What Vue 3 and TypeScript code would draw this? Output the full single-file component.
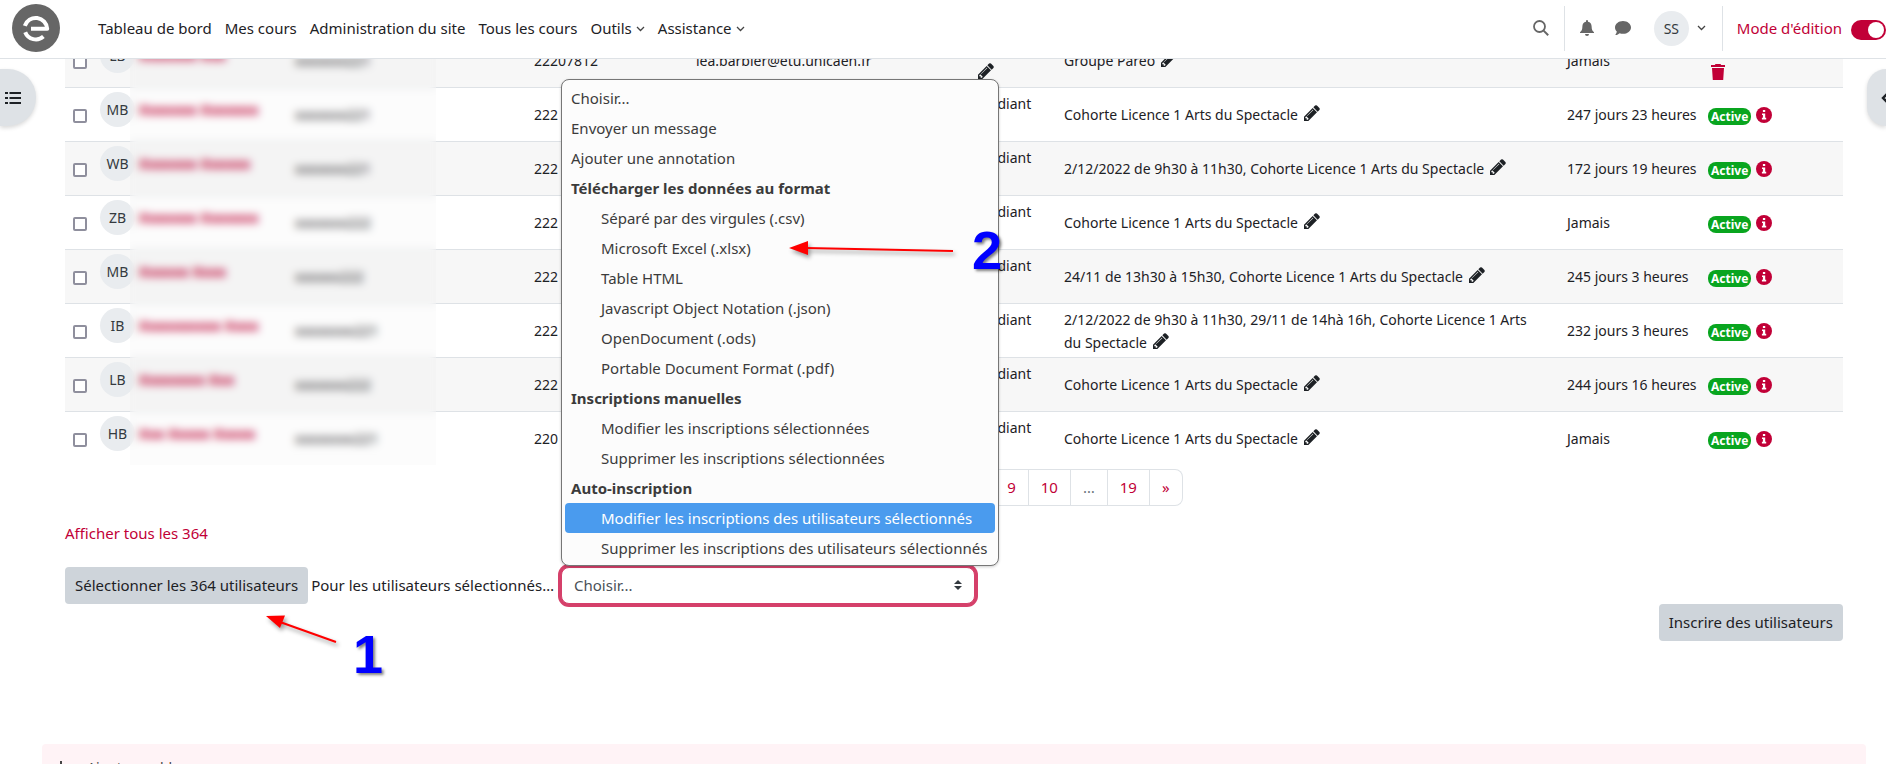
<script setup lang="ts">
import { ref } from 'vue'

interface Row {
  initials: string
  name: string
  login: string
  id: string
  email: string
  groups: string
  access: string
  active: boolean
}

const cohort = 'Cohorte Licence 1 Arts du Spectacle'

const rows: Row[] = [
  { initials: 'LB', name: 'Xxxxxxx Xxx', login: 'xxxxxxx221', id: '22207812', email: 'lea.barbier@etu.unicaen.fr', groups: 'Groupe Pareo', access: 'Jamais', active: false },
  { initials: 'MB', name: 'Xxxxxxx Xxxxxxx', login: 'xxxxxxx221', id: '222', email: '', groups: cohort, access: '247 jours 23 heures', active: true },
  { initials: 'WB', name: 'Xxxxxxx Xxxxxx', login: 'xxxxxxx221', id: '222', email: '', groups: '2/12/2022 de 9h30 à 11h30, ' + cohort, access: '172 jours 19 heures', active: true },
  { initials: 'ZB', name: 'Xxxxxxx Xxxxxxx', login: 'xxxxxxx222', id: '222', email: '', groups: cohort, access: 'Jamais', active: true },
  { initials: 'MB', name: 'Xxxxxx Xxxx', login: 'xxxxxx222', id: '222', email: '', groups: '24/11 de 13h30 à 15h30, ' + cohort, access: '245 jours 3 heures', active: true },
  { initials: 'IB', name: 'Xxxxxxxxxx Xxxx', login: 'xxxxxxxx221', id: '222', email: '', groups: '2/12/2022 de 9h30 à 11h30, 29/11 de 14hà 16h, ' + cohort, access: '232 jours 3 heures', active: true },
  { initials: 'LB', name: 'Xxxxxxxx Xxx', login: 'xxxxxxx222', id: '222', email: '', groups: cohort, access: '244 jours 16 heures', active: true },
  { initials: 'HB', name: 'Xxx Xxxxx Xxxxx', login: 'xxxxxxxx221', id: '220', email: '', groups: cohort, access: 'Jamais', active: true },
]

const nav = [
  { label: 'Tableau de bord', menu: false },
  { label: 'Mes cours', menu: false },
  { label: 'Administration du site', menu: false },
  { label: 'Tous les cours', menu: false },
  { label: 'Outils', menu: true },
  { label: 'Assistance', menu: true },
]

const pages = ['1', '2', '3', '4', '5', '6', '7', '8', '9', '10', '…', '19', '»']

const options: { label: string; kind: 'top' | 'group' | 'sub' }[] = [
  { label: 'Choisir...', kind: 'top' },
  { label: 'Envoyer un message', kind: 'top' },
  { label: 'Ajouter une annotation', kind: 'top' },
  { label: 'Télécharger les données au format', kind: 'group' },
  { label: 'Séparé par des virgules (.csv)', kind: 'sub' },
  { label: 'Microsoft Excel (.xlsx)', kind: 'sub' },
  { label: 'Table HTML', kind: 'sub' },
  { label: 'Javascript Object Notation (.json)', kind: 'sub' },
  { label: 'OpenDocument (.ods)', kind: 'sub' },
  { label: 'Portable Document Format (.pdf)', kind: 'sub' },
  { label: 'Inscriptions manuelles', kind: 'group' },
  { label: 'Modifier les inscriptions sélectionnées', kind: 'sub' },
  { label: 'Supprimer les inscriptions sélectionnées', kind: 'sub' },
  { label: 'Auto-inscription', kind: 'group' },
  { label: 'Modifier les inscriptions des utilisateurs sélectionnés', kind: 'sub' },
  { label: 'Supprimer les inscriptions des utilisateurs sélectionnés', kind: 'sub' },
]

const highlighted = ref(14)
const editing = ref(true)

const pencil =
  'M363 1408l91-91-235-235-91 91v107h128v128h107zm523-928q0-22-22-22-10 0-17 7l-542 542q-7 7-7 17 0 22 22 22 10 0 17-7l542-542q7-7 7-17zm-54-192l416 416-832 832h-416v-416zm683 96q0 53-37 90l-166 166-416-416 166-165q36-38 90-38 53 0 91 38l235 234q37 39 37 91z'
</script>

<template>
  <div class="page">
    <header class="topbar">
      <a href="#" class="logo" aria-label="Accueil">
        <svg viewBox="0 0 48 48" width="48" height="48">
          <circle cx="24" cy="24" r="24" fill="#666" />
          <path d="M12.800 21.800A11.500 11.500 0 0 1 35.200 24.800H19M13.200 28.200A11.500 11.500 0 0 0 31.400 32.600" fill="none" stroke="#fff" stroke-width="4" stroke-linejoin="round" />
        </svg>
      </a>
      <nav class="nav">
        <a v-for="n in nav" :key="n.label" href="#">{{ n.label }}<svg v-if="n.menu" class="chev" viewBox="0 0 9 6" width="9" height="6"><path d="M1 1l3.500 3.500L8 1" /></svg></a>
      </nav>
      <div class="tools">
        <button class="icon search" aria-label="Rechercher">
          <svg viewBox="0 0 16 16" width="16" height="16"><circle cx="6.500" cy="6.500" r="5.500" fill="none" stroke="#666" stroke-width="1.800" /><path d="M10.600 10.600l4.600 4.600" stroke="#666" stroke-width="2" /></svg>
        </button>
        <div class="account">
          <button class="icon" aria-label="Notifications">
            <svg viewBox="0 0 14 16" width="14" height="16"><path d="M7 0a1 1 0 0 1 1 1v.7c2.300.5 3.600 2.300 3.600 4.500 0 3.600 1 4.800 2.400 6v.8H0v-.8c1.400-1.200 2.400-2.400 2.400-6C2.400 4 3.700 2.200 6 1.700V1a1 1 0 0 1 1-1zM5 14h4a2 2 0 0 1-4 0z" fill="#666" /></svg>
          </button>
          <button class="icon chat" aria-label="Messages">
            <svg viewBox="0 0 16 14" width="16" height="14"><path d="M8 0c4.400 0 8 2.900 8 6.400s-3.600 6.400-8 6.400c-1.200 0-2.300-.2-3.300-.6C3.700 13 2.200 14 .3 14c.8-1 1.400-2.300 1.500-3.400C.7 9.500 0 8 0 6.400 0 2.900 3.600 0 8 0z" fill="#666" /></svg>
          </button>
          <button class="user"><span class="avatar">SS</span><svg class="chev" viewBox="0 0 9 6" width="9" height="6"><path d="M1 1l3.500 3.500L8 1" /></svg></button>
        </div>
        <label class="edit"><span>Mode d'édition</span><input v-model="editing" type="checkbox" class="switch" /></label>
      </div>
    </header>

    <button class="drawer left" aria-label="Ouvrir l'index du cours">
      <svg viewBox="0 0 16 14" width="16" height="14"><path d="M4.500 2H16M4.500 7H16M4.500 12H16M0 2h3M0 7h3M0 12h3" stroke="#1d2125" stroke-width="2.200" /></svg>
    </button>
    <button class="drawer right" aria-label="Ouvrir le tiroir des blocs">
      <svg viewBox="0 0 9 14" width="9" height="14"><path d="M7.500 1.500L2 7l5.500 5.500" fill="none" stroke="#1d2125" stroke-width="2.400" /></svg>
    </button>

    <main class="content">
      <div class="tablewrap">
        <table>
          <colgroup>
            <col class="c-check" /><col class="c-name" /><col class="c-login" /><col class="c-id" /><col class="c-mail" /><col class="c-role" /><col /><col class="c-access" /><col class="c-status" />
          </colgroup>
          <tbody>
            <tr v-for="(r, i) in rows" :key="i">
              <td><input type="checkbox" class="tick" :aria-label="'Sélectionner ' + r.initials" /></td>
              <td class="person"><a href="#"><span class="avatar">{{ r.initials }}</span><b>{{ r.name }}</b></a></td>
              <td>{{ r.login }}</td>
              <td>{{ r.id }}</td>
              <td>{{ r.email }}</td>
              <td>Étudiant <svg class="pen" viewBox="0 0 1536 1536" width="16" height="16"><path :d="pencil" /></svg></td>
              <td class="groups">{{ r.groups }} <svg class="pen" viewBox="0 0 1536 1536" width="16" height="16"><path :d="pencil" /></svg></td>
              <td class="nowrap">{{ r.access }}</td>
              <td>
                <div v-if="r.active" class="status">
                  <span class="badge">Active</span>
                  <svg class="info" viewBox="0 0 16 16" width="16" height="16"><circle cx="8" cy="8" r="8" fill="#c10037" /><path d="M6.900 3h2.300v2H6.900zM6 6.500h3.200v4.300h1V12.500H5.900v-1.700h1V8.100H6z" fill="#fff" /></svg>
                </div>
                <div v-else class="status bin">
                  <svg viewBox="0 0 14 16" width="14" height="16"><path d="M4.500 0h5l.7 1H14v2H0V1h3.800zM1 4h12l-.8 12H1.800z" fill="#c10037" /></svg>
                </div>
              </td>
            </tr>
          </tbody>
        </table>
        <div class="veil"></div>
      </div>

      <nav class="pager" aria-label="Page">
        <a v-for="p in pages" :key="p" href="#" :class="{ dots: p === '…' }">{{ p }}</a>
      </nav>

      <a href="#" class="all">Afficher tous les 364</a>

      <div class="actions">
        <button class="btn">Sélectionner les 364 utilisateurs</button>
        <label for="action">Pour les utilisateurs sélectionnés…</label>
        <div class="pick">
          <select id="action"><option>Choisir...</option></select>
          <svg class="sort" viewBox="0 0 8 10" width="8" height="10"><path d="M4 0l4 4H0zM4 10L0 6h8z" fill="#343a40" /></svg>
          <ul class="menu" role="listbox">
            <li v-for="(o, i) in options" :key="i" :class="[o.kind, { on: i === highlighted }]" :role="o.kind === 'group' ? 'presentation' : 'option'">{{ o.label }}</li>
          </ul>
        </div>
      </div>

      <div class="enrol"><button class="btn">Inscrire des utilisateurs</button></div>

      <section class="blocks">
        <button><svg viewBox="0 0 14 14" width="14" height="14"><path d="M7 0v14M0 7h14" stroke="#444" stroke-width="2" /></svg>Ajouter un bloc</button>
      </section>
    </main>

    <div class="note first">
      <svg viewBox="0 0 80 40" width="80" height="40"><path d="M15 11l56 20" stroke="#f00" stroke-width="2" /><path d="M1 5l19-.5L15 17z" fill="#f00" /></svg>
      <span>1</span>
    </div>
    <div class="note second">
      <svg viewBox="0 0 170 24" width="170" height="24"><path d="M18 10l147 3" stroke="#f00" stroke-width="2" /><path d="M1 10l19-7v14z" fill="#f00" /></svg>
      <span>2</span>
    </div>
  </div>
</template>

<style>
body { margin: 0; }
</style>

<style scoped>
.page {
  position: relative;
  height: 100vh;
  overflow: hidden;
  background: #fff;
  color: #1d2125;
  font: 15px/23px "Noto Sans", "Open Sans", sans-serif;
}
*, *::before { box-sizing: border-box; }
a { color: #c10037; text-decoration: none; }
button, select { font: inherit; color: inherit; margin: 0; }
button { border: 0; background: none; padding: 0; }

.topbar {
  position: absolute;
  inset: 0 0 auto 0;
  z-index: 5;
  display: flex;
  align-items: center;
  height: 59px;
  padding: 0 0 2px 12px;
  background: #fff;
  border-bottom: 1px solid #dee2e6;
}
.logo { display: flex; margin-right: 38px; }
.nav { display: flex; gap: 13px; }
.nav a { color: #1d2125; white-space: nowrap; }
.chev { margin-left: 4px; vertical-align: middle; }
.chev path { fill: none; stroke: #444; stroke-width: 1.300; }
.tools { display: flex; align-items: center; margin-left: auto; }
.icon { display: flex; }
.search { margin-right: 15px; }
.account {
  display: flex;
  align-items: center;
  height: 45px;
  padding: 0 16px 0 15px;
  border: solid #dee2e6;
  border-width: 0 1px;
}
.chat { margin-left: 21px; }
.user { display: flex; align-items: center; margin-left: 23px; }
.user .chev { margin-left: 8px; }
.avatar {
  display: flex;
  flex: none;
  align-items: center;
  justify-content: center;
  width: 35px;
  height: 35px;
  border-radius: 50%;
  background: #e9ecef;
  color: #343a40;
  font-size: 14px;
}
.edit { display: flex; align-items: center; gap: 9px; padding-left: 14px; color: #c10037; white-space: nowrap; }
.switch {
  appearance: none;
  width: 35px;
  height: 20px;
  margin: 4px 0 0;
  padding: 2px;
  border-radius: 10px;
  background: #adb5bd;
}
.switch::before { content: ""; display: block; width: 16px; height: 16px; border-radius: 50%; background: #fff; }
.switch:checked { background: #c10037; padding-left: 17px; }

.drawer {
  position: absolute;
  top: 69px;
  z-index: 4;
  display: flex;
  align-items: center;
  height: 57px;
  background: #dee2e6;
  box-shadow: 0 2px 4px rgba(0, 0, 0, .15);
}
.left { left: 0; width: 36px; padding-left: 5px; border-radius: 0 28px 28px 0; }
.right { right: 0; width: 19px; padding-left: 14px; border-radius: 28px 0 0 28px; overflow: hidden; }
.drawer svg { flex: none; }

.content { padding: 33px 43px 0 65px; }
.tablewrap { position: relative; }
table { width: 100%; table-layout: fixed; border-collapse: separate; border-spacing: 0; font-size: 14px; }
.c-check { width: 27px; }
.c-name { width: 195px; }
.c-login { width: 239px; }
.c-id { width: 162px; }
.c-mail { width: 280px; }
.c-role { width: 88px; }
.c-access { width: 141px; }
.c-status { width: 143px; }
td { height: 54px; padding: 0 8px; border-top: 1px solid #dee2e6; vertical-align: middle; }
tr:nth-child(odd) td { background: #f7f7f7; }
td.groups { padding-right: 16px; }
.nowrap { white-space: nowrap; }
.tick {
  appearance: none;
  display: block;
  width: 14px;
  height: 14px;
  margin: 2px 0 0;
  border: 2px solid #8f8f9d;
  border-radius: 2px;
  background: #fff;
}
td.person { vertical-align: top; padding-top: 4px; }
.person a { display: flex; align-items: center; gap: 4px; white-space: nowrap; }
.pen { margin-left: 2px; vertical-align: -1px; fill: #1d2125; }
.status { display: flex; align-items: center; gap: 5px; }
.bin { padding: 23px 0 0 3px; }
.badge {
  padding: 0 3px;
  margin-top: 3px;
  border-radius: 8px;
  background: #09a51f;
  color: #fff;
  font-size: 12px;
  line-height: 17px;
  font-weight: 700;
}
.veil {
  position: absolute;
  inset: 0 auto 0 65px;
  width: 306px;
  background: rgba(0, 0, 0, .01);
  backdrop-filter: blur(4px);
}

.pager { display: flex; justify-content: center; margin-top: 4px; }
.pager a { padding: 6px 12px; border: 1px solid #dee2e6; border-left-width: 0; }
.pager a:first-child { border-left-width: 1px; border-radius: 8px 0 0 8px; }
.pager a:last-child { border-radius: 0 8px 8px 0; }
.pager .dots { color: #6a737b; }
.all { display: table; margin-top: 16px; }
.actions { display: flex; align-items: center; margin-top: 22px; }
.actions label { margin: 0 7px 0 3px; white-space: nowrap; }
.btn {
  height: 37px;
  padding: 0 10px;
  border-radius: 4px;
  background: #ced4da;
  white-space: nowrap;
}
.pick { position: relative; width: 414px; }
select {
  appearance: none;
  display: block;
  width: 100%;
  height: 37px;
  padding: 0 12px;
  border: 1px solid #d5406a;
  border-radius: 8px;
  background: #fff;
  color: #495057;
  outline: none;
  box-shadow: 0 0 0 3px #d5406a;
}
.sort { position: absolute; right: 13px; top: 13px; }
.menu {
  position: absolute;
  left: 0;
  bottom: 100%;
  z-index: 3;
  margin: 0 0 1px;
  padding: 3px 3px 2px;
  list-style: none;
  border: 1px solid #767676;
  border-radius: 8px;
  background: #fcfcfc;
  color: #3b3b3b;
  line-height: 30px;
  box-shadow: 0 1px 3px rgba(0, 0, 0, .2);
}
.menu li { padding: 0 8px 0 6px; white-space: nowrap; border-radius: 4px; }
.menu .group { font-weight: 700; }
.menu .sub { padding-left: 36px; }
.menu .on { background: #4a9bee; color: #fff; }
.enrol { display: flex; justify-content: flex-end; }
.blocks { margin: 103px -23px 0 -23px; padding: 12px; border-radius: 4px; background: #fff3f6; }
.blocks button { display: flex; align-items: center; gap: 19px; font-size: 14px; color: #444; }

.note { position: absolute; z-index: 6; display: flex; pointer-events: none; }
.note svg { flex: none; fill: none; filter: drop-shadow(2px 3px 2px rgba(0, 0, 0, .4)); }
.note span { font: 700 54px/58px "Liberation Sans", sans-serif; color: #00f; text-shadow: 2px 2px 3px rgba(0, 0, 0, .5); }
.first { left: 265px; top: 611px; }
.second { left: 788px; top: 238px; }
.first span { margin: 14px 0 0 8px; }
.second span { margin: -17px 0 0 14px; }
</style>
